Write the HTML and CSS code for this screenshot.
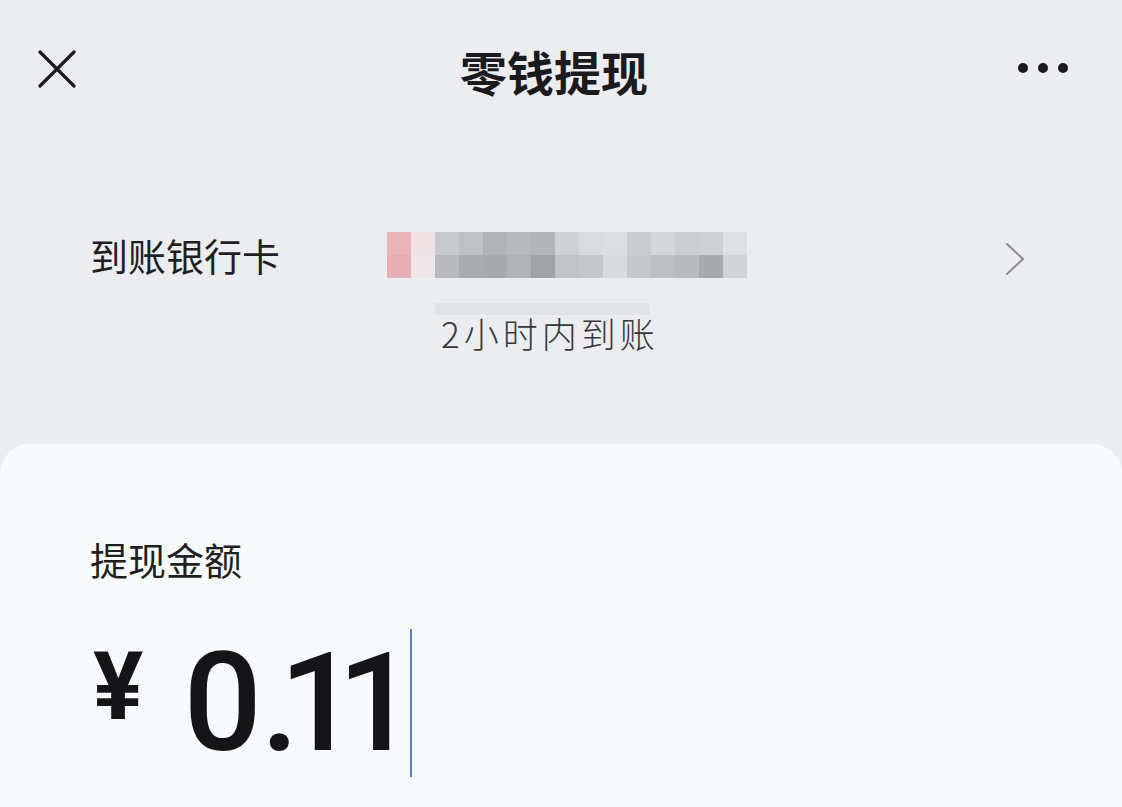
FILE: index.html
```html
<!DOCTYPE html>
<html lang="zh-CN">
<head>
  <meta charset="UTF-8">
  <title>零钱提现</title>
  <link rel="stylesheet" href="styles.css">
</head>
<body>
  <div class="topbar">
    <svg class="icon-close" width="38" height="38" viewBox="0 0 38 38">
      <path d="M2 2 L36 36 M36 2 L2 36" stroke="#1b1b1d" stroke-width="3.2" fill="none" stroke-linecap="round"/>
    </svg>
    <h1 class="title">零钱提现</h1>
    <div class="more">
      <span class="dot"></span><span class="dot"></span><span class="dot"></span>
    </div>
  </div>

  <div class="bank-row">
    <div class="bank-label">到账银行卡</div>
    <div class="bank-info">
      <div class="mosaic"></div>
      <div class="note-bar"></div>
      <div class="note">2小时内到账</div>
    </div>
    <svg class="chevron" width="22" height="34" viewBox="0 0 22 34">
      <path d="M3 2 L19 17 L3 32" stroke="#8a8b90" stroke-width="2" fill="none" stroke-linecap="round" stroke-linejoin="round"/>
    </svg>
  </div>

  <div class="card">
    <div class="amount-label">提现金额</div>
    <div class="amount">
      <span class="yen">¥</span>
      <span class="value"><span class="int">0</span>.11</span>
      <span class="caret"></span>
    </div>
  </div>
</body>
</html>
```

FILE: styles.css
```css
html, body {
  margin: 0;
  height: 100%;
}

body {
  background-color: #ebedf1;
  font-family: "Noto Sans CJK SC", "Noto Sans", sans-serif;
  color: #1b1b1d;
  overflow: hidden;
}

.topbar {
  height: 140px;
  display: flex;
  align-items: center;
  justify-content: space-between;
  padding: 0 54px 0 38px;
}

.icon-close {
  margin-top: -2px;
}

.title {
  margin: 0;
  font-size: 47px;
  font-weight: 700;
  line-height: 1;
  margin-left: 14px;
}

.more {
  display: flex;
  gap: 10px;
  margin-top: -4px;
}

.dot {
  width: 10px;
  height: 10px;
  border-radius: 50%;
  background-color: #1b1b1d;
}

.bank-row {
  display: flex;
  align-items: flex-start;
  padding: 92px 96px 0 90px;
  height: 212px;
}

.bank-label {
  width: 297px;
  font-size: 38px;
  line-height: 46px;
  color: #1f1f22;
}

.bank-info {
  flex: 1;
}

.mosaic {
  width: 360px;
  height: 46px;
  background-image:
    linear-gradient(to right,
      #e8b6b9 0 24px, #f0e2e5 24px 48px, #c9cacf 48px 72px, #c0c1c5 72px 96px,
      #b1b2b6 96px 120px, #b9babe 120px 144px, #b3b4b8 144px 168px, #d0d1d5 168px 192px,
      #dadbdf 192px 216px, #dcdde1 216px 240px, #cbccd0 240px 264px, #d6d7db 264px 288px,
      #cdced2 288px 312px, #cfd0d4 312px 336px, #e0e1e5 336px 360px),
    linear-gradient(to right,
      #e4aeb2 0 24px, #efe6ea 24px 48px, #b7b8bc 48px 72px, #abacb0 72px 96px,
      #a9aaae 96px 120px, #b2b3b7 120px 144px, #a2a3a7 144px 168px, #c2c3c7 168px 192px,
      #c6c7cb 192px 216px, #d9dade 216px 240px, #c7c8cc 240px 264px, #bebfc3 264px 288px,
      #b9babe 288px 312px, #a9aaae 312px 336px, #d3d4d8 336px 360px);
  background-size: 100% 50%;
  background-position: top left, bottom left;
  background-repeat: no-repeat;
}

.note-bar {
  width: 215px;
  height: 12px;
  margin: 25px 0 0 48px;
  background-color: #e2e3e7;
}

.note {
  margin-left: 54px;
  font-size: 35px;
  font-weight: 300;
  line-height: 36px;
  letter-spacing: 4px;
  color: #38383c;
}

.chevron {
  margin-top: 10px;
}

.card {
  background-color: #f8fbfc;
  border-radius: 30px 30px 0 0;
  min-height: 400px;
  padding: 92px 90px 0 90px;
}

.amount-label {
  font-size: 38px;
  line-height: 46px;
  color: #1f1f22;
}

.amount {
  display: flex;
  align-items: flex-start;
  margin-top: 52px;
  margin-left: 3px;
  font-family: Roboto, "Liberation Sans", sans-serif;
  color: #151517;
}

.yen {
  font-size: 94px;
  font-weight: 700;
  line-height: 1;
  margin-top: 6px;
}

.value {
  font-size: 138px;
  font-weight: 500;
  line-height: 1;
  letter-spacing: -20px;
  margin-left: 40px;
}

.value .int {
  letter-spacing: -1px;
}

.caret {
  width: 2px;
  height: 148px;
  margin-left: 14px;
  margin-top: -5px;
  background-color: #5a7fc0;
}
```
